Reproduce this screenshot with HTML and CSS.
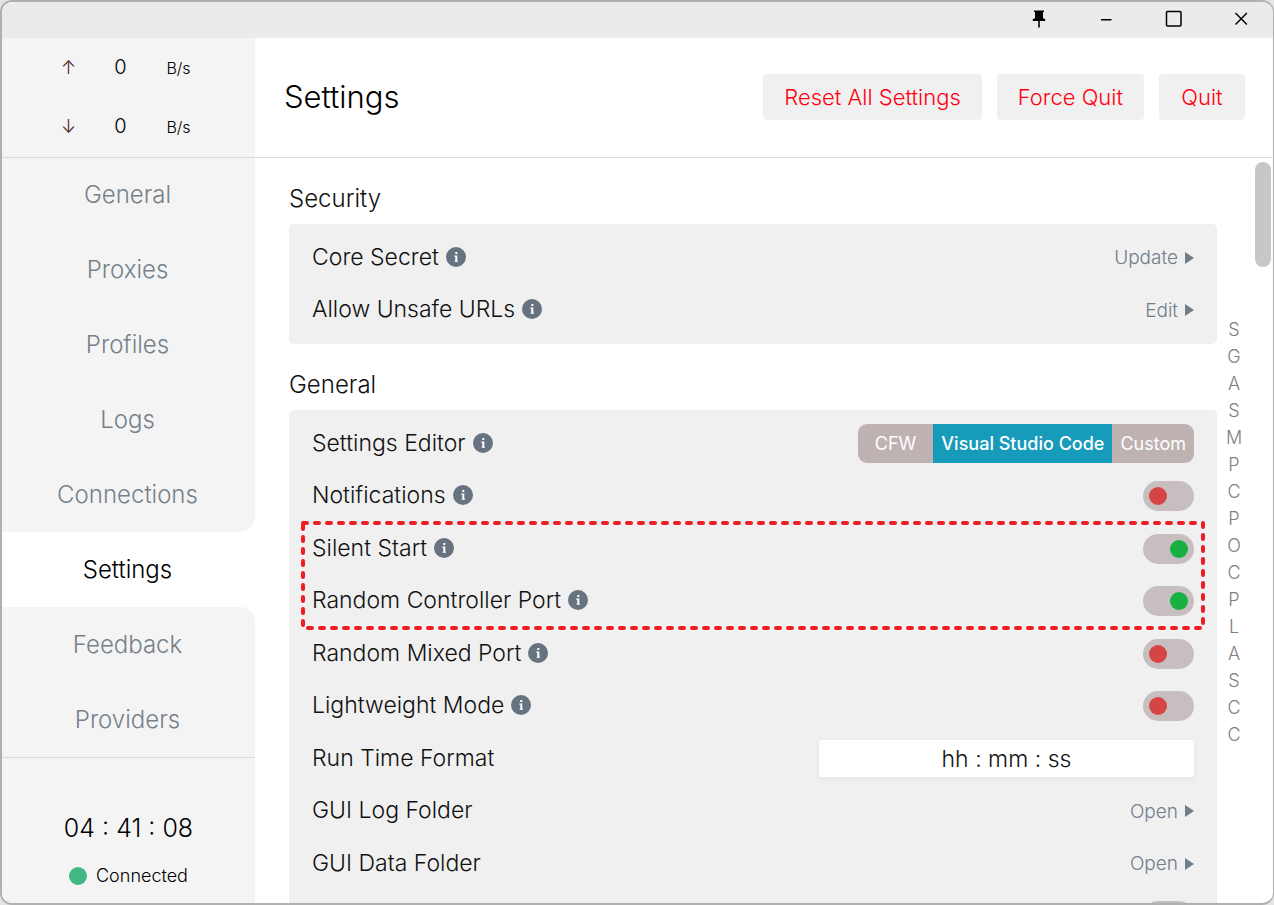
FILE: index.html
```html
<!DOCTYPE html>
<html lang="en">
<head>
<meta charset="utf-8">
<title>Settings</title>
<link rel="stylesheet" href="styles.css">
</head>
<body>
<svg class="defs" aria-hidden="true">
  <symbol id="info" viewBox="0 0 20 20">
    <circle cx="10" cy="10" r="10" fill="#687381"/>
    <path d="M9.300 5h2v2h-2zM8.300 8.600h3v5.100h.7v1.100H8.600v-1.100h.7v-4h-1z" fill="#fff"/>
  </symbol>
</svg>
<div class="window">
  <header class="titlebar">
    <button class="win-btn" aria-label="Pin"><svg width="20" height="20" viewBox="0 0 20 20"><path d="M5 1.500h10v1.500h-1v6l2.200 1.200v1.800h-5.400v6.500H9.200V12H3.800v-1.800L6 9V3H5z"/></svg></button>
    <button class="win-btn" aria-label="Minimize"><svg width="20" height="20" viewBox="0 0 20 20"><path d="M5 10h10.500v1.500H5z"/></svg></button>
    <button class="win-btn" aria-label="Maximize"><svg width="20" height="20" viewBox="0 0 20 20"><rect x="3.500" y="2.500" width="14.500" height="14.500" rx="1" fill="none" stroke="#000" stroke-width="1.500"/></svg></button>
    <button class="win-btn" aria-label="Close"><svg width="20" height="20" viewBox="0 0 20 20"><path d="M5.500 4l11.400 11.400M16.900 4L5.500 15.400" fill="none" stroke="#000" stroke-width="1.400"/></svg></button>
  </header>
  <div class="body">
    <aside class="sidebar">
      <div class="traffic">
        <div class="speed"><span class="arrow">↑</span><span class="num">0</span><span class="unit">B/s</span></div>
        <div class="speed"><span class="arrow">↓</span><span class="num">0</span><span class="unit">B/s</span></div>
      </div>
      <nav class="nav">
        <a href="#general">General</a>
        <a href="#proxies">Proxies</a>
        <a href="#profiles">Profiles</a>
        <a href="#logs">Logs</a>
        <a href="#connections" class="before-active">Connections</a>
        <a href="#settings" class="active">Settings</a>
        <a href="#feedback" class="after-active">Feedback</a>
        <a href="#providers">Providers</a>
      </nav>
      <div class="status">
        <div class="clock">04 : 41 : 08</div>
        <div class="state"><span class="dot"></span>Connected</div>
      </div>
    </aside>
    <main class="main">
      <div class="head">
        <h1>Settings</h1>
        <div class="actions">
          <button>Reset All Settings</button>
          <button>Force Quit</button>
          <button>Quit</button>
        </div>
      </div>
      <div class="scroll">
        <div class="content">
          <h2>Security</h2>
          <section class="card">
            <div class="row"><span class="label">Core Secret <svg class="info"><use href="#info"/></svg></span><button class="link">Update</button></div>
            <div class="row short"><span class="label">Allow Unsafe URLs <svg class="info"><use href="#info"/></svg></span><button class="link">Edit</button></div>
          </section>
          <h2>General</h2>
          <section class="card">
            <div class="row"><span class="label">Settings Editor <svg class="info"><use href="#info"/></svg></span>
              <div class="segment"><button class="cfw">CFW</button><button class="on">Visual Studio Code</button><button>Custom</button></div></div>
            <div class="row short"><label class="label" for="notif">Notifications <svg class="info"><use href="#info"/></svg></label><input class="toggle" type="checkbox" id="notif"></div>
            <div class="marked">
              <div class="row"><label class="label" for="silent">Silent Start <svg class="info"><use href="#info"/></svg></label><input class="toggle" type="checkbox" id="silent" checked></div>
              <div class="row short"><label class="label" for="rcp">Random Controller Port <svg class="info"><use href="#info"/></svg></label><input class="toggle" type="checkbox" id="rcp" checked></div>
              <div class="outline"><svg><rect width="100%" height="100%"/></svg></div>
            </div>
            <div class="row"><label class="label" for="rmp">Random Mixed Port <svg class="info"><use href="#info"/></svg></label><input class="toggle" type="checkbox" id="rmp"></div>
            <div class="row short"><label class="label" for="light">Lightweight Mode <svg class="info"><use href="#info"/></svg></label><input class="toggle" type="checkbox" id="light"></div>
            <div class="row"><label class="label" for="fmt">Run Time Format</label><input class="field" type="text" id="fmt" value="hh : mm : ss"></div>
            <div class="row short"><span class="label">GUI Log Folder</span><button class="link">Open</button></div>
            <div class="row"><span class="label">GUI Data Folder</span><button class="link">Open</button></div>
            <div class="row short"><span class="label"></span><input class="toggle" type="checkbox" aria-label="Option"></div>
          </section>
        </div>
        <nav class="index" aria-label="Sections">
          <a href="#s1">S</a><a href="#s2">G</a><a href="#s3">A</a><a href="#s4">S</a><a href="#s5">M</a><a href="#s6">P</a><a href="#s7">C</a><a href="#s8">P</a><a href="#s9">O</a><a href="#s10">C</a><a href="#s11">P</a><a href="#s12">L</a><a href="#s13">A</a><a href="#s14">S</a><a href="#s15">C</a><a href="#s16">C</a>
        </nav>
        <div class="track"><div class="thumb"></div></div>
      </div>
    </main>
  </div>
</div>
</body>
</html>
```
FILE: styles.css
```css
* { box-sizing: border-box; }
html, body { height: 100%; }
body { margin: 0; background: #e4e4e4; font-family: Inter, "Liberation Sans", sans-serif; font-weight: 300; color: #000; overflow: hidden; }
button, input { font: inherit; color: inherit; border: 0; margin: 0; padding: 0; background: none; }
a { color: inherit; text-decoration: none; }
.defs { display: none; }

.window { height: 100vh; display: flex; flex-direction: column; border: 2px solid #b0b0b0; border-right-width: 1px; border-radius: 12px; overflow: hidden; background: #fff; }
.titlebar { height: 36px; flex: none; display: flex; justify-content: flex-end; background: #ebebeb; }
.win-btn { width: 67px; display: flex; align-items: center; justify-content: center; padding-bottom: 2px; }
.body { flex: 1; min-height: 0; display: flex; }

.sidebar { width: 253px; flex: none; display: flex; flex-direction: column; background: #fff; }
.traffic { height: 120px; flex: none; border-bottom: 1px solid #dadada; background: #f4f4f4; }
.speed { height: 59px; display: grid; grid-template-columns: 52px 52px 64px; justify-content: center; align-items: center; text-align: center; padding: 0 4px 2px 0; }
.arrow { padding-top: 2px; font-size: 18px; color: #501818; }
.num { font-size: 20px; }
.unit { font-size: 16px; padding-top: 2px; }
.nav { flex: 1; display: flex; flex-direction: column; }
.nav a { flex: 1; display: flex; align-items: center; justify-content: center; padding: 0 2px 1px 0; background: #f4f4f4; color: #76808a; font-size: 24px; }
.nav .active { background: #fff; color: #000; }
.nav .before-active { border-bottom-right-radius: 15px; }
.nav .after-active { border-top-right-radius: 15px; }
.status { height: 146px; flex: none; padding-top: 54px; border-top: 1px solid #dadada; background: #f4f4f4; text-align: center; }
.clock { font-size: 25px; line-height: 32px; }
.state { display: flex; align-items: center; justify-content: center; gap: 9px; margin-top: 20px; font-size: 18px; line-height: 24px; }
.dot { width: 18px; height: 18px; border-radius: 50%; background: #41b883; }

.main { flex: 1; min-width: 0; display: flex; flex-direction: column; }
.head { height: 120px; flex: none; display: flex; align-items: center; justify-content: space-between; padding: 0 28px 2px 29px; border-bottom: 1px solid #dadada; }
h1 { margin: 0; font-size: 31px; font-weight: 300; }
.actions { display: flex; gap: 15px; }
.actions button { min-width: 86px; height: 46px; padding: 0 21px; border-radius: 4px; background: #f0f0f0; color: #ff0011; font-size: 22px; }

.scroll { flex: 1; min-height: 0; display: flex; overflow: hidden; }
.content { flex: 1; min-width: 0; padding: 16px 0 0 34px; }
h2 { margin: 0; height: 50px; line-height: 50px; font-size: 24px; font-weight: 300; color: #111; }
.card + h2 { margin-top: 16px; }
.card { padding: 7px 23px 8px; border-radius: 5px; background: #f0f0f0; color: #111; }
.row { height: 53px; display: flex; align-items: center; justify-content: space-between; }
.short { height: 52px; }
.label { display: flex; align-items: center; gap: 7px; padding-bottom: 2px; font-size: 23px; }
.info { width: 20px; height: 20px; }
.link { display: flex; align-items: center; gap: 7px; font-size: 19px; color: #727d8a; }
.link::after { content: ""; border-left: 9px solid #727d8a; border-top: 6px solid transparent; border-bottom: 6px solid transparent; }

.segment { display: flex; height: 39px; border-radius: 9px; overflow: hidden; background: #beb3b2; color: #fff; font-size: 18px; font-weight: 400; }
.segment button { padding: 0 8px; }
.segment .cfw { padding: 0 17px; }
.segment .on { background: #179bbb; padding: 0 8px; font-weight: 500; }

.toggle { appearance: none; width: 51px; height: 30px; padding: 6px; display: flex; border-radius: 15px; background: #c7bebf; }
.toggle::before { content: ""; width: 18px; height: 18px; border-radius: 50%; background: #d54545; }
.toggle:checked { justify-content: flex-end; }
.toggle:checked::before { background: #16b043; }
.field { width: 375px; height: 37px; border-radius: 3px; background: #fff; box-shadow: 0 2px 6px rgba(0, 0, 0, 0.06); text-align: center; font-size: 23px; }

.marked { position: relative; }
.outline { position: absolute; top: 1px; bottom: -1px; left: -9px; right: -9px; pointer-events: none; }
.outline svg { display: block; width: 100%; height: 100%; overflow: visible; }
.outline rect { fill: none; stroke: #ee1c25; stroke-width: 4px; stroke-linecap: round; stroke-dasharray: 4 8; }

.index { width: 34px; flex: none; display: flex; flex-direction: column; justify-content: center; padding-top: 2px; text-align: center; font-size: 18px; color: #808080; }
.index a { line-height: 27px; }
.track { width: 22px; flex: none; padding: 4px 2px 0 4px; }
.thumb { height: 105px; border-radius: 8px; background: #c8c7c6; }
```
